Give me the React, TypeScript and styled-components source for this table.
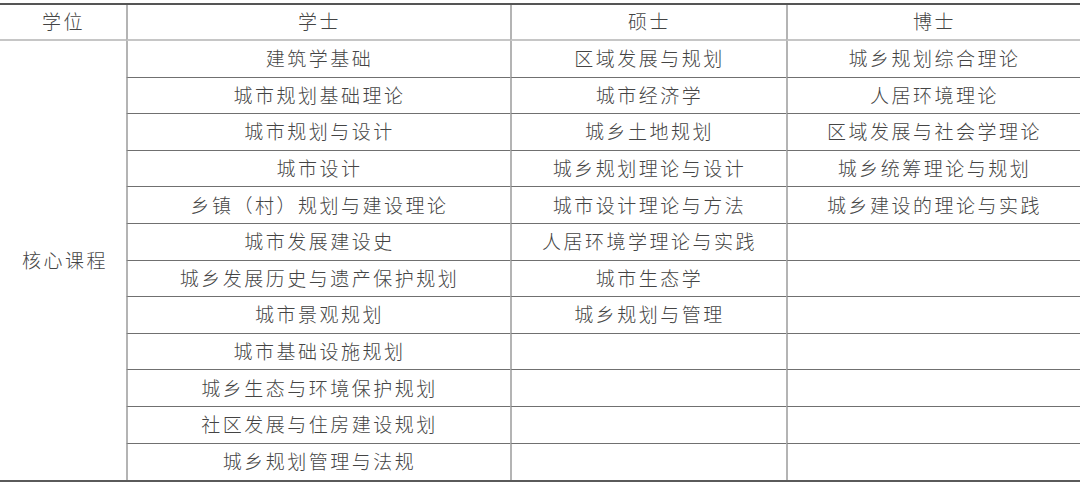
import React from "react";
import styled, { createGlobalStyle } from "styled-components";

const Global = createGlobalStyle`
  html, body { margin: 0; padding: 0; background: #fff; }
  body { width: 1080px; height: 488px; overflow: hidden; }
`;

const Page = styled.div`
  padding-top: 3px;
  width: 1080px;
`;

const Table = styled.div`
  display: grid;
  grid-template-columns: 126px 384px 276px 294px;
  grid-template-rows: 36px repeat(12, 36.6px);
  border-top: 2px solid #555;
  border-bottom: 2px solid #5a5a5a;
  font-family: "Noto Sans CJK SC", "Noto Sans", sans-serif;
  font-weight: 300;
  color: #444;
  font-size: 19px;
  letter-spacing: 2.5px;
`;

const Cell = styled.div<{ $head?: boolean; $first?: boolean; $last?: boolean }>`
  box-sizing: border-box;
  display: flex;
  align-items: center;
  justify-content: center;
  text-indent: 1px;
  white-space: nowrap;
  padding-bottom: ${(p) => (p.$head ? "4px" : "2px")};
  border-left: ${(p) => (p.$first ? "none" : "2px solid #b4b4b4")};
  border-bottom: ${(p) =>
    p.$head ? "2px solid #c6c6c6" : p.$last ? "none" : "1.5px solid #707070"};
`;

const LabelCell = styled(Cell)`
  grid-row: span 12;
  border-bottom: none;
  padding-bottom: 3px;
  text-indent: 4px;
`;

const bachelor = [
  "建筑学基础",
  "城市规划基础理论",
  "城市规划与设计",
  "城市设计",
  "乡镇（村）规划与建设理论",
  "城市发展建设史",
  "城乡发展历史与遗产保护规划",
  "城市景观规划",
  "城市基础设施规划",
  "城乡生态与环境保护规划",
  "社区发展与住房建设规划",
  "城乡规划管理与法规",
];

const master = [
  "区域发展与规划",
  "城市经济学",
  "城乡土地规划",
  "城乡规划理论与设计",
  "城市设计理论与方法",
  "人居环境学理论与实践",
  "城市生态学",
  "城乡规划与管理",
];

const doctor = [
  "城乡规划综合理论",
  "人居环境理论",
  "区域发展与社会学理论",
  "城乡统筹理论与规划",
  "城乡建设的理论与实践",
];

export default function App() {
  const rows = Array.from({ length: 12 }, (_, i) => i);
  return (
    <Page>
      <Global />
      <Table>
        <Cell $head $first>学位</Cell>
        <Cell $head>学士</Cell>
        <Cell $head>硕士</Cell>
        <Cell $head>博士</Cell>
        {rows.map((i) => (
          <React.Fragment key={i}>
            {i === 0 && <LabelCell $first>核心课程</LabelCell>}
            <Cell $last={i === 11}>{bachelor[i]}</Cell>
            <Cell $last={i === 11}>{master[i] ?? ""}</Cell>
            <Cell $last={i === 11}>{doctor[i] ?? ""}</Cell>
          </React.Fragment>
        ))}
      </Table>
    </Page>
  );
}
